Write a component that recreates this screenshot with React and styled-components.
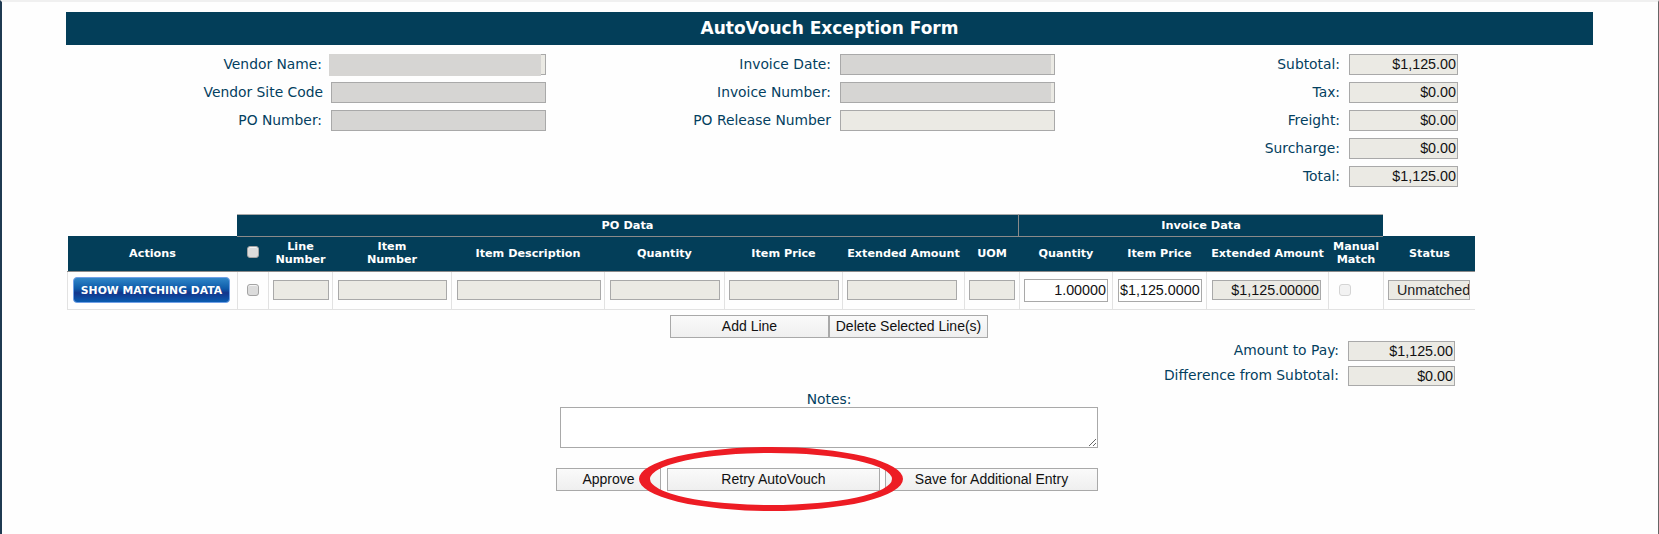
import React from "react";
import styled, { createGlobalStyle } from "styled-components";

const Global = createGlobalStyle`
  html, body { margin: 0; padding: 0; background: #fff; overflow: hidden; }
  * { box-sizing: border-box; }
`;

const Page = styled.div`
  position: relative;
  width: 1659px;
  height: 534px;
  overflow: hidden;
  background: #fefefe;
  border-top: 2px solid #f0f0f0;
  border-left: 2px solid #1f3a52;
  border-right: 1px solid #666;
  padding: 10px 0 0 64px;
  font-family: "DejaVu Sans", Verdana, sans-serif;
  color: #034060;
`;

const TitleBar = styled.h1`
  margin: 0;
  width: 1527px;
  height: 33px;
  background: #033e59;
  color: #fff;
  font-size: 17px;
  font-weight: 700;
  line-height: 33px;
  text-align: center;
`;

const InfoGrid = styled.div`
  display: grid;
  grid-template-columns: 480px 509px 403px;
  margin-top: 9px;
`;

const InfoColumn = styled.div`
  display: flex;
  flex-direction: column;
  gap: 7px;
`;

const InfoRow = styled.div`
  display: flex;
  justify-content: flex-end;
  align-items: center;
  height: 21px;
  gap: ${(p) => p.$gap || 9}px;
`;

const Label = styled.label`
  font-size: 13.85px;
  white-space: nowrap;
  color: #034060;
  padding-bottom: 2px;
`;

const ReadOnly = styled.div`
  position: relative;
  width: ${(p) => p.$w}px;
  height: ${(p) => p.$h || 21}px;
  background: ${(p) => (p.$redacted ? "#d6d5d3" : "#ebeae4")};
  box-shadow: ${(p) => (p.$tail ? "inset -3px 0 0 #ebeae4" : "none")};
  border: 1px solid #a9a9a9;
  font-family: "Liberation Sans", Arial, sans-serif;
  font-size: 14.33px;
  line-height: ${(p) => (p.$h || 21) - 2}px;
  color: #111;
  text-align: right;
  padding-right: 1px;
  white-space: nowrap;
  overflow: hidden;
`;

const RedactionPatch = styled.div`
  position: absolute;
  left: -1px;
  top: -1px;
  width: 212px;
  height: 22px;
  background: #d6d5d3;
`;

const VendorNameField = styled(ReadOnly)`
  overflow: visible;
`;

const TableWrap = styled.div`
  margin: 27px 0 0 1px;
  width: 1408px;
  overflow: hidden;
`;

const GroupRow = styled.div`
  display: grid;
  grid-template-columns: 170px 782px 364px;
  height: 22px;
`;

const GroupCell = styled.div`
  background: ${(p) => (p.$empty ? "transparent" : "#033e59")};
  border-top: ${(p) => (p.$empty ? "none" : "1px solid #aaa")};
  border-bottom: ${(p) => (p.$empty ? "none" : "1px solid #8a8a8a")};
  border-right: ${(p) => (p.$sep ? "1px solid #8a8a8a" : "none")};
  color: #fff;
  font-size: 11.3px;
  font-weight: 700;
  line-height: 21px;
  text-align: center;
`;

const Table = styled.table`
  border-collapse: collapse;
  table-layout: fixed;
  width: 1408px;
`;

const Head = styled.th`
  height: 35px;
  padding: 0;
  background: #033e59;
  color: #fff;
  font-size: 11.2px;
  font-weight: 700;
  line-height: 13px;
  text-align: center;
  border-bottom: 1px solid #8a8a8a;
`;

const Cell = styled.td`
  height: 38px;
  padding: 0;
  text-align: center;
  vertical-align: middle;
  border-right: 1px solid #e2e2e2;
  border-bottom: 1px solid #e2e2e2;
  &:first-child { border-left: 1px solid #e2e2e2; }
  &:last-child { border-right: none; }
`;

const CellInner = styled.div`
  display: flex;
  justify-content: flex-start;
  padding-left: ${(p) => p.$start}px;
`;

const EditBox = styled.div`
  width: ${(p) => p.$w}px;
  height: 23px;
  background: #fff;
  border: 1px solid #a9a9a9;
  font-family: "Liberation Sans", Arial, sans-serif;
  font-size: 14.33px;
  line-height: 21px;
  color: #111;
  text-align: ${(p) => p.$align || "right"};
  padding: 0 1px;
  white-space: nowrap;
  overflow: hidden;
`;

const Check = styled.span`
  display: inline-block;
  width: 12px;
  height: 12px;
  border-radius: 3px;
  background: ${(p) => (p.$light ? "#f2f2f2" : "#dcdcdc")};
  border: 1px solid ${(p) => (p.$light ? "#d4d4d4" : "#a4a4a4")};
  box-shadow: inset 0 1px 0 #f4f4f4;
`;

const MatchButton = styled.button`
  width: 157px;
  height: 26px;
  padding: 0;
  margin-left: 5px;
  display: block;
  border: 1px solid #6f9fe6;
  border-radius: 4px;
  background: linear-gradient(#2f86c8 0%, #0e5aa8 45%, #12358c 62%, #0a5cb0 100%);
  color: #fff;
  font-family: "DejaVu Sans", Verdana, sans-serif;
  font-size: 10.8px;
  font-weight: 700;
  white-space: nowrap;
`;

const StatusTag = styled.div`
  width: 82px;
  height: 20px;
  background: #ebeae4;
  border: 1px solid #a9a9a9;
  font-family: "Liberation Sans", Arial, sans-serif;
  font-size: 14.33px;
  line-height: 18px;
  color: #222;
  padding-left: 8px;
  white-space: nowrap;
  overflow: hidden;
  margin-left: 4px;
`;

const LineActions = styled.div`
  display: flex;
  margin: 5px 0 0 604px;
`;

const GreyButton = styled.button`
  width: ${(p) => p.$w}px;
  height: 23px;
  margin-left: ${(p) => p.$ml || 0}px;
  padding: 0;
  background: linear-gradient(#fafafa, #efefef);
  border: 1px solid #a9a9a9;
  font-family: "Liberation Sans", Arial, sans-serif;
  font-size: 14px;
  color: #111;
  white-space: nowrap;
`;

const TotalsBlock = styled.div`
  display: flex;
  flex-direction: column;
  gap: 4px;
  width: 1389px;
  margin-top: 3px;
`;

const Notes = styled.div`
  display: flex;
  flex-direction: column;
  align-items: center;
  width: 538px;
  margin: 4px 0 0 494px;
`;

const NotesLabel = styled.div`
  font-size: 13.85px;
  line-height: 16px;
  color: #034060;
`;

const NotesArea = styled.textarea`
  display: block;
  width: 538px;
  height: 41px;
  margin: 0;
  padding: 2px;
  background: #fff;
  border: 1px solid #a9a9a9;
  border-radius: 0;
  outline: none;
`;

const FormActions = styled.div`
  display: flex;
  margin: 20px 0 0 490px;
`;

const ManualCheck = styled(Check)`
  display: block;
  margin-left: 10px;
`;

const CircleMark = styled.svg`
  position: absolute;
  left: 635px;
  top: 443px;
  pointer-events: none;
`;

const columns = [170, 31, 64, 119, 153, 120, 118, 122, 55, 93, 94, 122, 55, 92];

const leftRows = [
  { label: "Vendor Site Code", w: 215, gap: 8 },
  { label: "PO Number:", w: 215 },
];
const midRows = [
  { label: "Invoice Date:", redacted: true },
  { label: "Invoice Number:", redacted: true },
  { label: "PO Release Number" },
];
const totals = [
  ["Subtotal:", "$1,125.00"],
  ["Tax:", "$0.00"],
  ["Freight:", "$0.00"],
  ["Surcharge:", "$0.00"],
  ["Total:", "$1,125.00"],
];

const Multi = ({ a, b }) => (<>{a}<br />{b}</>);

export default function App() {
  return (
    <Page>
      <Global />
      <TitleBar>AutoVouch Exception Form</TitleBar>

      <InfoGrid>
        <InfoColumn>
          <InfoRow $gap={7}>
            <Label>Vendor Name:</Label>
            <VendorNameField $w={217}><RedactionPatch /></VendorNameField>
          </InfoRow>
          {leftRows.map((r) => (
            <InfoRow key={r.label} $gap={r.gap}>
              <Label>{r.label}</Label>
              <ReadOnly $w={r.w} $redacted />
            </InfoRow>
          ))}
        </InfoColumn>
        <InfoColumn>
          {midRows.map((r) => (
            <InfoRow key={r.label}>
              <Label>{r.label}</Label>
              <ReadOnly $w={215} $redacted={r.redacted} $tail={r.redacted} />
            </InfoRow>
          ))}
        </InfoColumn>
        <InfoColumn>
          {totals.map(([l, v]) => (
            <InfoRow key={l}>
              <Label>{l}</Label>
              <ReadOnly $w={109}>{v}</ReadOnly>
            </InfoRow>
          ))}
        </InfoColumn>
      </InfoGrid>

      <TableWrap>
        <GroupRow>
          <GroupCell $empty />
          <GroupCell $sep>PO Data</GroupCell>
          <GroupCell>Invoice Data</GroupCell>
        </GroupRow>
        <Table>
          <colgroup>
            {columns.map((w, i) => <col key={i} style={{ width: w }} />)}
          </colgroup>
          <thead>
            <tr>
              <Head>Actions</Head>
              <Head><Check /></Head>
              <Head><Multi a="Line" b="Number" /></Head>
              <Head><Multi a="Item" b="Number" /></Head>
              <Head>Item Description</Head>
              <Head>Quantity</Head>
              <Head>Item Price</Head>
              <Head>Extended Amount</Head>
              <Head>UOM</Head>
              <Head>Quantity</Head>
              <Head>Item Price</Head>
              <Head>Extended Amount</Head>
              <Head><Multi a="Manual" b="Match" /></Head>
              <Head>Status</Head>
            </tr>
          </thead>
          <tbody>
            <tr>
              <Cell><MatchButton>SHOW MATCHING DATA</MatchButton></Cell>
              <Cell><Check /></Cell>
              <Cell><CellInner $start={4}><ReadOnly $w={56} $h={20} /></CellInner></Cell>
              <Cell><CellInner $start={5}><ReadOnly $w={109} $h={20} /></CellInner></Cell>
              <Cell><CellInner $start={5}><ReadOnly $w={144} $h={20} /></CellInner></Cell>
              <Cell><CellInner $start={5}><ReadOnly $w={110} $h={20} /></CellInner></Cell>
              <Cell><CellInner $start={4}><ReadOnly $w={110} $h={20} /></CellInner></Cell>
              <Cell><CellInner $start={4}><ReadOnly $w={110} $h={20} /></CellInner></Cell>
              <Cell><CellInner $start={4}><ReadOnly $w={46} $h={20} /></CellInner></Cell>
              <Cell><CellInner $start={4}><EditBox $w={84}>1.00000</EditBox></CellInner></Cell>
              <Cell><CellInner $start={5}><EditBox $w={84} $align="left">$1,125.0000</EditBox></CellInner></Cell>
              <Cell><CellInner $start={5}><ReadOnly $w={109} $h={20}>$1,125.00000</ReadOnly></CellInner></Cell>
              <Cell><ManualCheck $light /></Cell>
              <Cell><StatusTag>Unmatched</StatusTag></Cell>
            </tr>
          </tbody>
        </Table>
      </TableWrap>

      <LineActions>
        <GreyButton $w={159}>Add Line</GreyButton>
        <GreyButton $w={159}>Delete Selected Line(s)</GreyButton>
      </LineActions>

      <TotalsBlock>
        <InfoRow>
          <Label>Amount to Pay:</Label>
          <ReadOnly $w={107} $h={20}>$1,125.00</ReadOnly>
        </InfoRow>
        <InfoRow>
          <Label>Difference from Subtotal:</Label>
          <ReadOnly $w={107} $h={20}>$0.00</ReadOnly>
        </InfoRow>
      </TotalsBlock>

      <Notes>
        <NotesLabel>Notes:</NotesLabel>
        <NotesArea aria-label="Notes" />
      </Notes>

      <FormActions>
        <GreyButton $w={105}>Approve</GreyButton>
        <GreyButton $w={213} $ml={6}>Retry AutoVouch</GreyButton>
        <GreyButton $w={213} $ml={5}>Save for Additional Entry</GreyButton>
      </FormActions>

      <CircleMark width="270" height="70" viewBox="0 0 270 70">
        <path
          fill="#ed1c24"
          fillRule="evenodd"
          d="M2 34a132 32 0 1 0 264 0a132 32 0 1 0 -264 0Z M13 34a121 26 0 1 0 242 0a121 26 0 1 0 -242 0Z"
        />
      </CircleMark>
    </Page>
  );
}
